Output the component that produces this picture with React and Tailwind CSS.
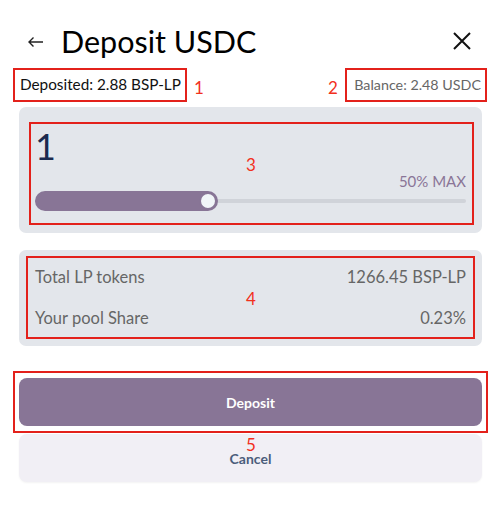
import React from "react";

function Annot({ className }) {
    return <div className={"absolute border-2 border-[#e3211b] " + className} />;
}

function Num({ className, children }) {
    return (
        <span className={"absolute text-[#f2301d] text-[17px] leading-none " + className}>{children}</span>
    );
}

export default function App() {
    return (
        <div className="relative w-[501px] h-[518px] bg-white font-['Lato',sans-serif]">
            {/* header */}
            <div className="flex items-center pl-[27px] pr-[29px] pt-[24px] h-[58px]">
                <svg width="17" height="12" viewBox="0 0 17 12" className="mt-[2px]">
                    <path d="M16 6H2M6.5 1.5L2 6l4.5 4.5" fill="none" stroke="#222" strokeWidth="1.4" />
                </svg>
                <h1 className="ml-[17px] text-[30.5px] leading-none text-black">Deposit USDC</h1>
                <svg width="20" height="20" viewBox="0 0 20 20" className="ml-auto">
                    <path d="M2 2L18 18M18 2L2 18" stroke="#111" strokeWidth="2" />
                </svg>
            </div>

            {/* balances */}
            <div className="flex justify-between items-center px-[20px] mt-[19px] leading-none">
                <span className="text-[#111] text-[15.3px]">Deposited: 2.88 BSP-LP</span>
                <span className="text-[#666] text-[14.3px]">Balance: 2.48 USDC</span>
            </div>

            {/* amount card */}
            <div className="mx-[19px] mt-[15px] h-[126px] rounded-[7px] bg-[#e3e6eb] px-[16px] pt-[21px]">
                <div className="text-[#1b2a4e] text-[36px] leading-none">1</div>
                <div className="text-right text-[#8a7597] text-[15px] leading-none mt-[10px]">50% MAX</div>
                <div className="relative mt-[2px] h-[20px] flex items-center">
                    <div className="w-full h-[4px] rounded-full bg-[#d0d3d9]" />
                    <div className="absolute left-0 top-0 h-[20px] w-[183px] rounded-full bg-[#887596]" />
                    <div className="absolute left-[164px] top-[1px] w-[18px] h-[18px] rounded-full bg-[#f1f5f8] border-2 border-[#887596]" />
                </div>
            </div>

            {/* info card */}
            <div className="mx-[19px] mt-[17px] h-[96px] rounded-[7px] bg-[#e3e6eb] px-[16px] pt-[19px] text-[16.5px] text-[#666] leading-none">
                <div className="flex justify-between">
                    <span>Total LP tokens</span>
                    <span>1266.45 BSP-LP</span>
                </div>
                <div className="flex justify-between mt-[24px]">
                    <span>Your pool Share</span>
                    <span>0.23%</span>
                </div>
            </div>

            {/* buttons */}
            <div className="mx-[19px] mt-[32px] flex flex-col gap-[8px]">
                <button className="h-[48px] rounded-[8px] bg-[#887596] text-white text-[14px] font-bold">Deposit</button>
                <button className="h-[48px] rounded-[8px] bg-[#f1eff5] text-[#4b5d7b] text-[14px] font-bold shadow-[0_1px_2px_rgba(0,0,0,0.05)]">Cancel</button>
            </div>

            {/* annotations */}
            <Annot className="left-[13px] top-[68px] w-[174px] h-[34px]" />
            <Num className="left-[194px] top-[79px]">1</Num>
            <Num className="left-[328px] top-[79px]">2</Num>
            <Annot className="left-[345px] top-[68px] w-[142px] h-[34px]" />
            <Annot className="left-[29px] top-[122px] w-[445px] h-[103px]" />
            <Num className="left-[246px] top-[156px]">3</Num>
            <Annot className="left-[26px] top-[256px] w-[449px] h-[83px]" />
            <Num className="left-[246px] top-[290px]">4</Num>
            <Annot className="left-[13px] top-[371px] w-[475px] h-[62px]" />
            <Num className="left-[246px] top-[436px]">5</Num>
        </div>
    );
}
